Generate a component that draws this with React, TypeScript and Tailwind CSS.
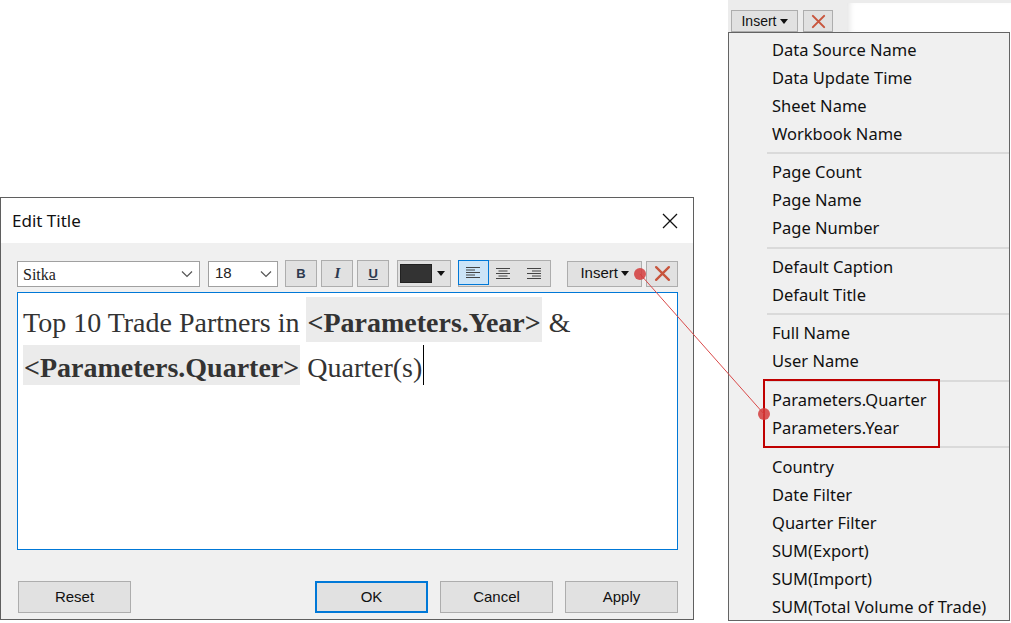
import React from 'react';

const groups: string[][] = [
  ['Data Source Name', 'Data Update Time', 'Sheet Name', 'Workbook Name'],
  ['Page Count', 'Page Name', 'Page Number'],
  ['Default Caption', 'Default Title'],
  ['Full Name', 'User Name'],
  ['Parameters.Quarter', 'Parameters.Year'],
  ['Country', 'Date Filter', 'Quarter Filter', 'SUM(Export)', 'SUM(Import)', 'SUM(Total Volume of Trade)'],
];

function Chevron() {
  return (
    <svg width="12" height="8" viewBox="0 0 12 8">
      <polyline points="1,1.5 6,6.5 11,1.5" fill="none" stroke="#555" strokeWidth="1.2" />
    </svg>
  );
}

function RedX({ size = 16 }: { size?: number }) {
  return (
    <svg width={size} height={size} viewBox="0 0 16 16">
      <path d="M2 2 L14 14 M14 2 L2 14" stroke="#c8553d" strokeWidth="2.2" strokeLinecap="round" />
    </svg>
  );
}

function AlignIcon({ kind }: { kind: 'left' | 'center' | 'right' }) {
  const rows = [0, 1, 2, 3, 4];
  return (
    <svg width="14" height="12" viewBox="0 0 14 12">
      {rows.map((r) => {
        const w = r % 2 === 0 ? 14 : 9;
        const x = kind === 'left' ? 0 : kind === 'center' ? (14 - w) / 2 : 14 - w;
        return <rect key={r} x={x} y={r * 2.5} width={w} height="1" fill="#444" />;
      })}
    </svg>
  );
}

function ToolButton({ children, className = '' }: { children: React.ReactNode; className?: string }) {
  return (
    <div
      className={`h-[27px] flex items-center justify-center bg-[#e1e1e1] border border-[#adadad] ${className}`}
    >
      {children}
    </div>
  );
}

function InsertButton({ small = false }: { small?: boolean }) {
  return (
    <div
      className={`flex items-center justify-center gap-[3px] bg-[#e1e1e1] border border-[#adadad] text-[#111] ${
        small ? 'w-[67px] h-[22px] text-[14px]' : 'w-[75px] h-[26px] text-[15px]'
      }`}
    >
      <span>Insert</span>
      <svg width="8" height="5" viewBox="0 0 8 5">
        <polygon points="0,0 8,0 4,5" fill="#111" />
      </svg>
    </div>
  );
}

function FooterButton({ label, primary = false }: { label: string; primary?: boolean }) {
  return (
    <div
      className={`w-[113px] h-[32px] flex items-center justify-center bg-[#e1e1e1] text-[15px] text-[#111] ${
        primary ? 'border-2 border-[#0078d7]' : 'border border-[#adadad]'
      }`}
    >
      {label}
    </div>
  );
}

export default function App() {
  return (
    <div className="relative w-[1011px] h-[623px] bg-white overflow-hidden font-['Liberation_Sans',Arial,sans-serif]">
      {/* Edit Title dialog */}
      <div className="absolute left-0 top-[197px] w-[694px] h-[423px] border border-[#5f5f5f] bg-[#f0f0f0] flex flex-col">
        <div className="h-[45px] bg-white flex items-center justify-between pl-[11px] pr-[15px]">
          <span className="font-['Noto_Sans',sans-serif] text-[17px] text-[#111]">Edit Title</span>
          <svg width="16" height="16" viewBox="0 0 16 16">
            <path d="M1 1 L15 15 M15 1 L1 15" stroke="#111" strokeWidth="1.3" />
          </svg>
        </div>

        <div className="flex-1 flex flex-col pl-[16px] pr-[15px]">
          {/* toolbar */}
          <div className="mt-[17px] h-[27px] flex items-center">
            <div className="w-[184px] h-[26px] bg-white border border-[#a0a0a0] flex items-center justify-between pl-[5px] pr-[6px]">
              <span className="font-['Liberation_Serif',serif] text-[16px] text-[#222] pt-[3px]">Sitka</span>
              <Chevron />
            </div>
            <div className="ml-[8px] w-[70px] h-[26px] bg-white border border-[#a0a0a0] flex items-center justify-between pl-[6px] pr-[5px]">
              <span className="text-[15px] text-[#222]">18</span>
              <Chevron />
            </div>
            <ToolButton className="ml-[7px] w-[33px]">
              <span className="text-[13px] font-bold text-[#2d3a4f]">B</span>
            </ToolButton>
            <ToolButton className="ml-[4px] w-[32px]">
              <span className="font-['Liberation_Serif',serif] italic font-bold text-[15px] text-[#2d3a4f]">I</span>
            </ToolButton>
            <ToolButton className="ml-[4px] w-[32px]">
              <span className="text-[13px] font-bold underline text-[#2d3a4f]">U</span>
            </ToolButton>
            <ToolButton className="ml-[8px] w-[54px] gap-[5px] pr-[2px]">
              <div className="w-[32px] h-[19px] bg-[#333] border border-[#222]" />
              <svg width="8" height="5" viewBox="0 0 8 5">
                <polygon points="0,0 8,0 4,5" fill="#111" />
              </svg>
            </ToolButton>
            <div className="ml-[7px] w-[94px] h-[27px] flex border border-[#adadad] bg-[#e1e1e1]">
              <div className="w-[31px] h-full flex items-center justify-center bg-[#cce4f7] border border-[#0078d7] -m-px">
                <AlignIcon kind="left" />
              </div>
              <div className="w-[31px] h-full flex items-center justify-center">
                <AlignIcon kind="center" />
              </div>
              <div className="w-[31px] h-full flex items-center justify-center">
                <AlignIcon kind="right" />
              </div>
            </div>
            <div className="ml-[16px]">
              <InsertButton />
            </div>
            <div className="ml-[4px] w-[32px] h-[26px] flex items-center justify-center bg-[#e1e1e1] border border-[#adadad]">
              <RedX size={17} />
            </div>
          </div>

          {/* text area */}
          <div className="mt-[5px] h-[258px] bg-white border border-[#0078d7] pl-[5px] font-['Liberation_Serif',serif] text-[28px] text-[#333]">
            <div className="mt-[4px] flex items-start whitespace-pre">
              <span className="h-[45px] pt-[6px] leading-[39px]">{'Top 10 Trade Partners in '}</span>
              <span className="h-[45px] pt-[6px] leading-[39px] bg-[#ebebeb] font-bold px-[1px]">&lt;Parameters.Year&gt;</span>
              <span className="h-[45px] pt-[6px] leading-[39px]">{' &'}</span>
            </div>
            <div className="mt-[3px] flex items-start whitespace-pre">
              <span className="h-[40px] pt-[6px] leading-[34px] bg-[#ebebeb] font-bold px-[1px]">&lt;Parameters.Quarter&gt;</span>
              <span className="h-[40px] pt-[6px] leading-[34px]">{' Quarter(s)'}</span>
              <span className="w-px h-[40px] bg-black ml-[1px]" />
            </div>
          </div>

          {/* footer */}
          <div className="mt-auto mb-[6px] flex items-center">
            <div className="ml-[1px]">
              <FooterButton label="Reset" />
            </div>
            <div className="flex-1" />
            <FooterButton label="OK" primary />
            <div className="ml-[12px]">
              <FooterButton label="Cancel" />
            </div>
            <div className="ml-[12px]">
              <FooterButton label="Apply" />
            </div>
          </div>
        </div>
      </div>

      {/* Insert menu */}
      <div className="absolute left-[728px] top-0 w-[283px] h-[623px] flex flex-col">
        <div className="h-[32px] flex bg-[#ececec]">
          <div className="w-[119px] flex items-end gap-[5px] pl-[3px]">
            <InsertButton small />
            <div className="w-[30px] h-[22px] flex items-center justify-center bg-[#e1e1e1] border border-[#adadad]">
              <RedX size={15} />
            </div>
          </div>
          <div className="flex-1 mt-[3px] bg-white shadow-[inset_6px_0_6px_-4px_rgba(0,0,0,0.12)]" />
        </div>
        <div className="w-[282px] h-[589px] border border-[#646464] bg-[#f0f0f0] pt-[3px] font-['Noto_Sans',sans-serif] text-[16.5px] text-[#111]">
          {groups.map((g, gi) => (
            <div key={gi}>
              {gi > 0 && <div className="ml-[38px] mt-[4px] mb-[4.6px] h-[2px] bg-[#dadada]" />}
              {g.map((item) => (
                <div key={item} className="h-[28px] flex items-center pl-[43px]">
                  {item}
                </div>
              ))}
            </div>
          ))}
        </div>
      </div>

      {/* callout */}
      <div className="absolute left-[763px] top-[379px] w-[177px] h-[69px] border-2 border-[#c00000]" />
      <svg className="absolute left-0 top-0 pointer-events-none" width="1011" height="623">
        <line x1="640" y1="274" x2="764" y2="414" stroke="#d94a4a" strokeWidth="1" />
        <circle cx="640" cy="274" r="6" fill="#d33c3c" fillOpacity="0.85" />
        <circle cx="764" cy="414" r="6" fill="#d33c3c" fillOpacity="0.85" />
      </svg>
    </div>
  );
}
